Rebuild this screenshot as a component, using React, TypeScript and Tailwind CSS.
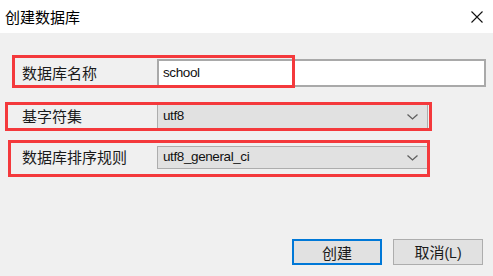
import React from 'react';

const cjk = "font-['Microsoft_YaHei','Noto_Sans_CJK_SC',sans-serif]";
const latin = "font-['Liberation_Sans','Noto_Sans_CJK_SC',sans-serif]";

const Chevron = () => (
  <svg width="11" height="6" viewBox="0 0 11 6" className="shrink-0">
    <path d="M0.5 0.5 L5.5 5 L10.5 0.5" fill="none" stroke="#5f5f5f" strokeWidth="1.3" />
  </svg>
);

const Select = ({ value, height }: { value: string; height: string }) => (
  <div className={`${height} w-[271px] flex items-center justify-between pl-[5px] pr-[9px] bg-[#e1e1e1] border border-[#adadad]`}>
    <span className={`${latin} text-[13.5px] tracking-[-0.4px] text-[#111]`}>{value}</span>
    <Chevron />
  </div>
);

const App: React.FC = () => {
  return (
    <div className="relative w-[493px] h-[276px] bg-[#f0f0f0] overflow-hidden">
      {/* title bar */}
      <div className="h-[33px] bg-white flex items-center justify-between pl-[5px] pr-[10px]">
        <span className={`${cjk} text-[15px] text-black leading-none`}>创建数据库</span>
        <svg width="12" height="12" viewBox="0 0 12 12">
          <path d="M0.5 0.5 L11.5 11.5 M11.5 0.5 L0.5 11.5" stroke="#111" strokeWidth="1.1" />
        </svg>
      </div>

      {/* form */}
      <div className="flex flex-col pl-[22px] pt-[26px]">
        <div className="flex items-center h-[28px]">
          <span className={`${cjk} w-[135px] text-[15px] text-[#1a1a1a]`}>数据库名称</span>
          <div className="w-[329px] h-[28px] flex items-center pl-[4px] bg-white border-2 border-[#a9a9a9]">
            <span className={`${latin} text-[13.5px] tracking-[-0.4px] text-[#111]`}>school</span>
          </div>
        </div>
        <div className="flex items-center mt-[17px] h-[25px]">
          <span className={`${cjk} w-[135px] text-[15px] text-[#1a1a1a]`}>基字符集</span>
          <Select value="utf8" height="h-[25px]" />
        </div>
        <div className="flex items-center mt-[17px] h-[23px]">
          <span className={`${cjk} w-[135px] text-[15px] text-[#1a1a1a]`}>数据库排序规则</span>
          <Select value="utf8_general_ci" height="h-[23px]" />
        </div>
      </div>

      {/* buttons */}
      <div className="flex justify-end gap-[11px] pr-[10px] mt-[70px]">
        <button className={`${cjk} w-[90px] h-[26px] bg-[#e1e1e1] border-2 border-[#0078d7] text-[15px] text-[#1a1a1a] leading-none`}>
          创建
        </button>
        <button className={`${cjk} w-[90px] h-[26px] bg-[#e1e1e1] border border-[#adadad] text-[15px] text-[#1a1a1a] leading-none`}>
          取消<span className={`${latin} text-[14px]`}>(L)</span>
        </button>
      </div>

      {/* red annotation boxes */}
      <div className="absolute left-[12px] top-[55px] w-[283px] h-[33px] border-[3px] border-[#f4393c]" />
      <div className="absolute left-[5px] top-[102px] w-[427px] h-[29px] border-[3px] border-[#f4393c]" />
      <div className="absolute left-[8px] top-[140px] w-[422px] h-[37px] border-[3px] border-[#f4393c]" />
    </div>
  );
};

export default App;
